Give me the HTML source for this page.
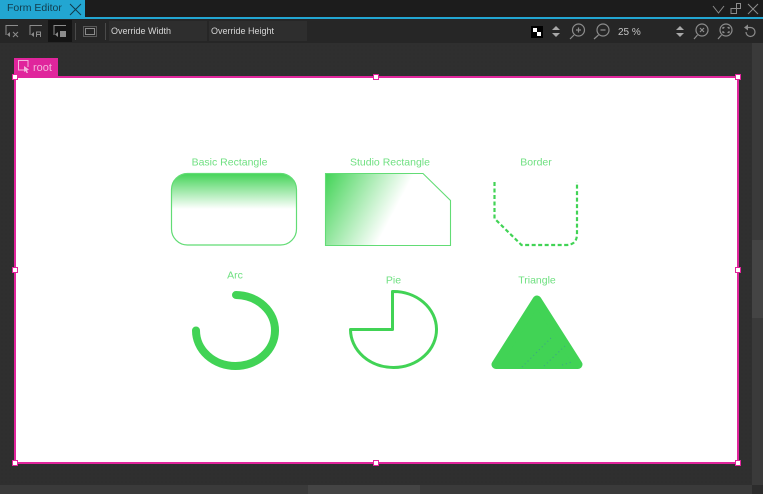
<!DOCTYPE html>
<html><head><meta charset="utf-8"><style>
html,body{margin:0;padding:0;width:763px;height:494px;overflow:hidden;background:#2e2e2e;font-family:"Liberation Sans",sans-serif}
div{position:absolute;box-sizing:border-box}
.dots{background-color:#2f2f2f;background-image:radial-gradient(#292929 0.6px,transparent 0.7px);background-size:4px 4px}
.field{top:21px;height:20px;width:98px;background:#2e2e2e;color:#d6d6d6;font-size:9px;line-height:21px;padding-left:2px}
.h{width:6px;height:6px;background:#fff;border:1px solid #e0259c}
svg{position:absolute;left:0;top:0}
</style></head><body>
<div class="dots" style="left:0;top:0;width:763px;height:494px"></div>
<div style="left:0;top:0;width:763px;height:17px;background:#1c1c1c"></div>
<div style="left:0;top:0;width:85px;height:19px;background:#22a6d2;color:#123c4c;font-size:10.500px;line-height:17px;padding-left:7px">Form Editor</div>
<div style="left:0;top:17px;width:763px;height:2px;background:#22a6d2"></div>
<div style="left:0;top:19px;width:763px;height:24px;background:#262626"></div>
<div style="left:48px;top:20px;width:24px;height:22px;background:#141414"></div>
<div class="field" style="left:109px">Override Width</div>
<div class="field" style="left:209px">Override Height</div>
<div style="left:752px;top:43px;width:11px;height:442px;background:#3a3a3a"></div>
<div style="left:752px;top:240px;width:11px;height:78px;background:#444"></div>
<div style="left:0;top:485px;width:752px;height:9px;background:#3a3a3a"></div>
<div style="left:308px;top:485px;width:112px;height:9px;background:#444"></div>
<div style="left:752px;top:485px;width:11px;height:9px;background:#2c2c2c"></div>

<div style="left:14px;top:58px;width:44px;height:19px;background:#e0259c;color:#f3b5dc;font-size:11px;line-height:21px;padding-left:19px">root</div>
<div style="left:14px;top:76px;width:725px;height:388px;background:#fff;border:2px solid #e0259c"></div>

<svg width="763" height="494" viewBox="0 0 763 494" fill="none">
<defs>
<linearGradient id="g1" x1="0" y1="173" x2="0" y2="209" gradientUnits="userSpaceOnUse"><stop offset="0" stop-color="#41d355"/><stop offset="1" stop-color="#fff"/></linearGradient>
<linearGradient id="g2" x1="325" y1="173" x2="395" y2="210" gradientUnits="userSpaceOnUse"><stop offset="0" stop-color="#41d355"/><stop offset="1" stop-color="#fff"/></linearGradient>
</defs>
<rect x="171.500" y="173.500" width="125" height="71.500" rx="16" ry="16" fill="url(#g1)" stroke="#62dc75" stroke-width="1.200"/>
<path d="M325.500 173.500H423L450.500 200.500V245.500H325.500Z" fill="url(#g2)" stroke="#62dc75" stroke-width="1.100"/>
<path d="M494.500 182V218.500L521.500 245H566Q577 245 577 234V182" stroke="#41d355" stroke-width="2.200" stroke-dasharray="4 2.500"/>
<path d="M236 295A39.500 35.500 0 1 1 196 330.500" stroke="#41d355" stroke-width="8" stroke-linecap="round"/>
<path d="M392.500 291.500A43 38 0 1 1 350.500 329.500H392.500Z" stroke="#41d355" stroke-width="3" stroke-linejoin="round"/>
<path d="M537 300L496 364.500H578Z" fill="#41d355" stroke="#41d355" stroke-width="9" stroke-linejoin="round"/>
<path d="M522 367L551 338M544 366L565 346M562 365L572 362" stroke="#3c9f8c" stroke-width="1" stroke-dasharray="1 3"/>

<g fill="#6fe081" font-family="Liberation Sans, sans-serif" font-size="10.500" text-anchor="middle">
<text x="229.500" y="165.500">Basic Rectangle</text>
<text x="390" y="165.500">Studio Rectangle</text>
<text x="536" y="165.500">Border</text>
<text x="235" y="278.500">Arc</text>
<text x="393.500" y="283.500">Pie</text>
<text x="537" y="283.500">Triangle</text>
</g>

<path d="M70 4L81 15M81 4L70 15" stroke="#123c4c" stroke-width="1"/>
<g stroke="#8c8c8c" stroke-width="1">
<path d="M713 6L718.500 13L724 6"/>
<path d="M730.500 8.500H736.500V13.500H731V8.500ZM736.500 8.500V3.500H740.500V8.500H736.500"/>
<path d="M748 4L758 14M758 4L748 14"/>
</g>
<g stroke="#8c8c8c" stroke-width="1">
<path d="M6 35V25.500H18"/><path d="M13 32L18 37M18 32L13 37"/><path d="M10 32L7 34.500L10 37Z" fill="#8c8c8c" stroke="none"/>
<path d="M30 35V25.500H42"/><path d="M36.500 37V32H40.500V37M36.500 34.500H40.500"/><path d="M34 32L31 34.500L34 37Z" fill="#8c8c8c" stroke="none"/>
<path d="M54 35V25.500H66"/><rect x="60" y="31" width="6" height="6" fill="#8c8c8c" stroke="none"/><path d="M58 32L55 34.500L58 37Z" fill="#8c8c8c" stroke="none"/>
<path d="M75.500 23V40M105.500 23V40" stroke="#4a4a4a"/>
<rect x="85.500" y="28.500" width="9" height="6"/>
<rect x="83.500" y="26.500" width="13" height="10" stroke-dasharray="1 1"/>
</g>
<rect x="531" y="26" width="12" height="12" fill="#000"/>
<rect x="533" y="28" width="4" height="4" fill="#fff"/><rect x="537" y="32" width="4" height="4" fill="#fff"/>
<g fill="#a8a8a8">
<path d="M552 30L556 26L560 30ZM552 33H560L556 37Z"/>
<path d="M676 30L680 26L684 30ZM676 33H684L680 37Z"/>
</g>
<g stroke="#8c8c8c" stroke-width="1.200">
<circle cx="578.500" cy="30" r="6"/><path d="M574 35L570 39M576 30H581M578.500 27.500V32.500"/>
<circle cx="603" cy="30" r="6"/><path d="M598.500 35L594 39M600.500 30H605.500"/>
<circle cx="702" cy="30" r="6"/><path d="M697.500 35L694 39M700 28L704 32M704 28L700 32"/>
<circle cx="726" cy="30" r="6"/><path d="M721.500 35L718 39M723 29V27.500H724.500M727.500 27.500H729V29M729 31V32.500H727.500M724.500 32.500H723V31"/>
<path d="M746 27.500H750.500A4.500 4.500 0 1 1 746 32"/>
</g>
<path d="M744 27.500L748 24.500V30.500Z" fill="#8c8c8c"/>
<text x="618" y="35" fill="#c4c4c4" font-family="Liberation Sans, sans-serif" font-size="10">25 %</text>
<path d="M25 70H18.500V60.500H28V67" stroke="#f3b5dc" stroke-width="1"/>
<path d="M24 66L29 69.500L27 70.500L28 73H26.500L25.500 71L24 72Z" fill="#f3b5dc"/>
</svg>

<div class="h" style="left:12px;top:74px"></div>
<div class="h" style="left:373px;top:74px"></div>
<div class="h" style="left:735px;top:74px"></div>
<div class="h" style="left:12px;top:267px"></div>
<div class="h" style="left:735px;top:267px"></div>
<div class="h" style="left:12px;top:460px"></div>
<div class="h" style="left:373px;top:460px"></div>
<div class="h" style="left:735px;top:460px"></div>
</body></html>
